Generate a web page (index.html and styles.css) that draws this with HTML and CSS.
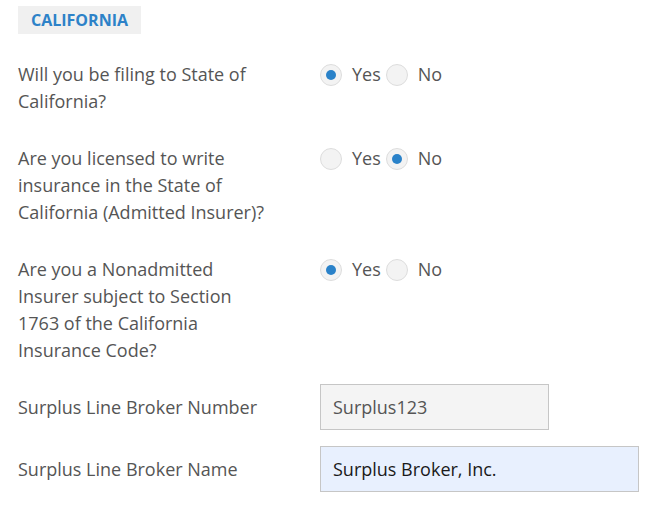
FILE: index.html
```html
<!DOCTYPE html>
<html>
<head>
<meta charset="utf-8">
<link rel="stylesheet" href="styles.css">
</head>
<body>
<div class="section">
  <div class="section-title">CALIFORNIA</div>
  <div class="form">
    <div class="row q">
      <div class="label">Will you be filing to State of California?</div>
      <div class="radios">
        <span class="radio checked"></span><span class="opt">Yes</span>
        <span class="radio"></span><span class="opt">No</span>
      </div>
    </div>
    <div class="row q">
      <div class="label">Are you licensed to write insurance in the State of California (Admitted Insurer)?</div>
      <div class="radios">
        <span class="radio"></span><span class="opt">Yes</span>
        <span class="radio checked"></span><span class="opt">No</span>
      </div>
    </div>
    <div class="row q last">
      <div class="label">Are you a Nonadmitted Insurer subject to Section 1763 of the California Insurance Code?</div>
      <div class="radios">
        <span class="radio checked"></span><span class="opt">Yes</span>
        <span class="radio"></span><span class="opt">No</span>
      </div>
    </div>
    <div class="row field">
      <div class="label">Surplus Line Broker Number</div>
      <div class="input short">Surplus123</div>
    </div>
    <div class="row field">
      <div class="label">Surplus Line Broker Name</div>
      <div class="input long filled">Surplus Broker, Inc.</div>
    </div>
  </div>
</div>
</body>
</html>
```

FILE: styles.css
```css
html, body {
  margin: 0;
  padding: 0;
  background: #ffffff;
}
body {
  font-family: "Open Sans", "Liberation Sans", sans-serif;
  color: #555555;
  font-size: 18px;
  line-height: 27px;
}
.section {
  padding: 6px 0 0 18px;
}
.section-title {
  display: inline-block;
  background: #f0f0f0;
  color: #2d82c8;
  font-weight: 700;
  font-size: 16px;
  height: 28px;
  line-height: 28px;
  padding: 0 13px;
}
.form {
  display: flex;
  flex-direction: column;
  margin-top: 27px;
}
.row {
  display: grid;
  grid-template-columns: 250px auto;
  column-gap: 52px;
}
.row.q {
  margin-bottom: 30px;
}
.row.q.last {
  margin-bottom: 20px;
}
.row.field {
  align-items: center;
  margin-bottom: 16px;
}
.radios {
  display: flex;
  align-items: center;
  height: 27px;
}
.radio {
  box-sizing: border-box;
  width: 22px;
  height: 22px;
  border-radius: 50%;
  border: 1px solid #dddddd;
  background: #f3f3f3;
  display: flex;
  align-items: center;
  justify-content: center;
}
.radio.checked::after {
  content: "";
  width: 10px;
  height: 10px;
  border-radius: 50%;
  background: #2a82c9;
}
.opt {
  margin-left: 10px;
  margin-right: 5px;
}
.input {
  box-sizing: border-box;
  height: 46px;
  border: 1px solid #c6c6c6;
  background: #f4f4f4;
  padding: 0 12px;
  display: flex;
  align-items: center;
  color: #555555;
}
.input.short {
  width: 229px;
}
.input.long {
  width: 319px;
}
.input.filled {
  background: #e8f0fe;
  color: #1a1a1a;
}
```
